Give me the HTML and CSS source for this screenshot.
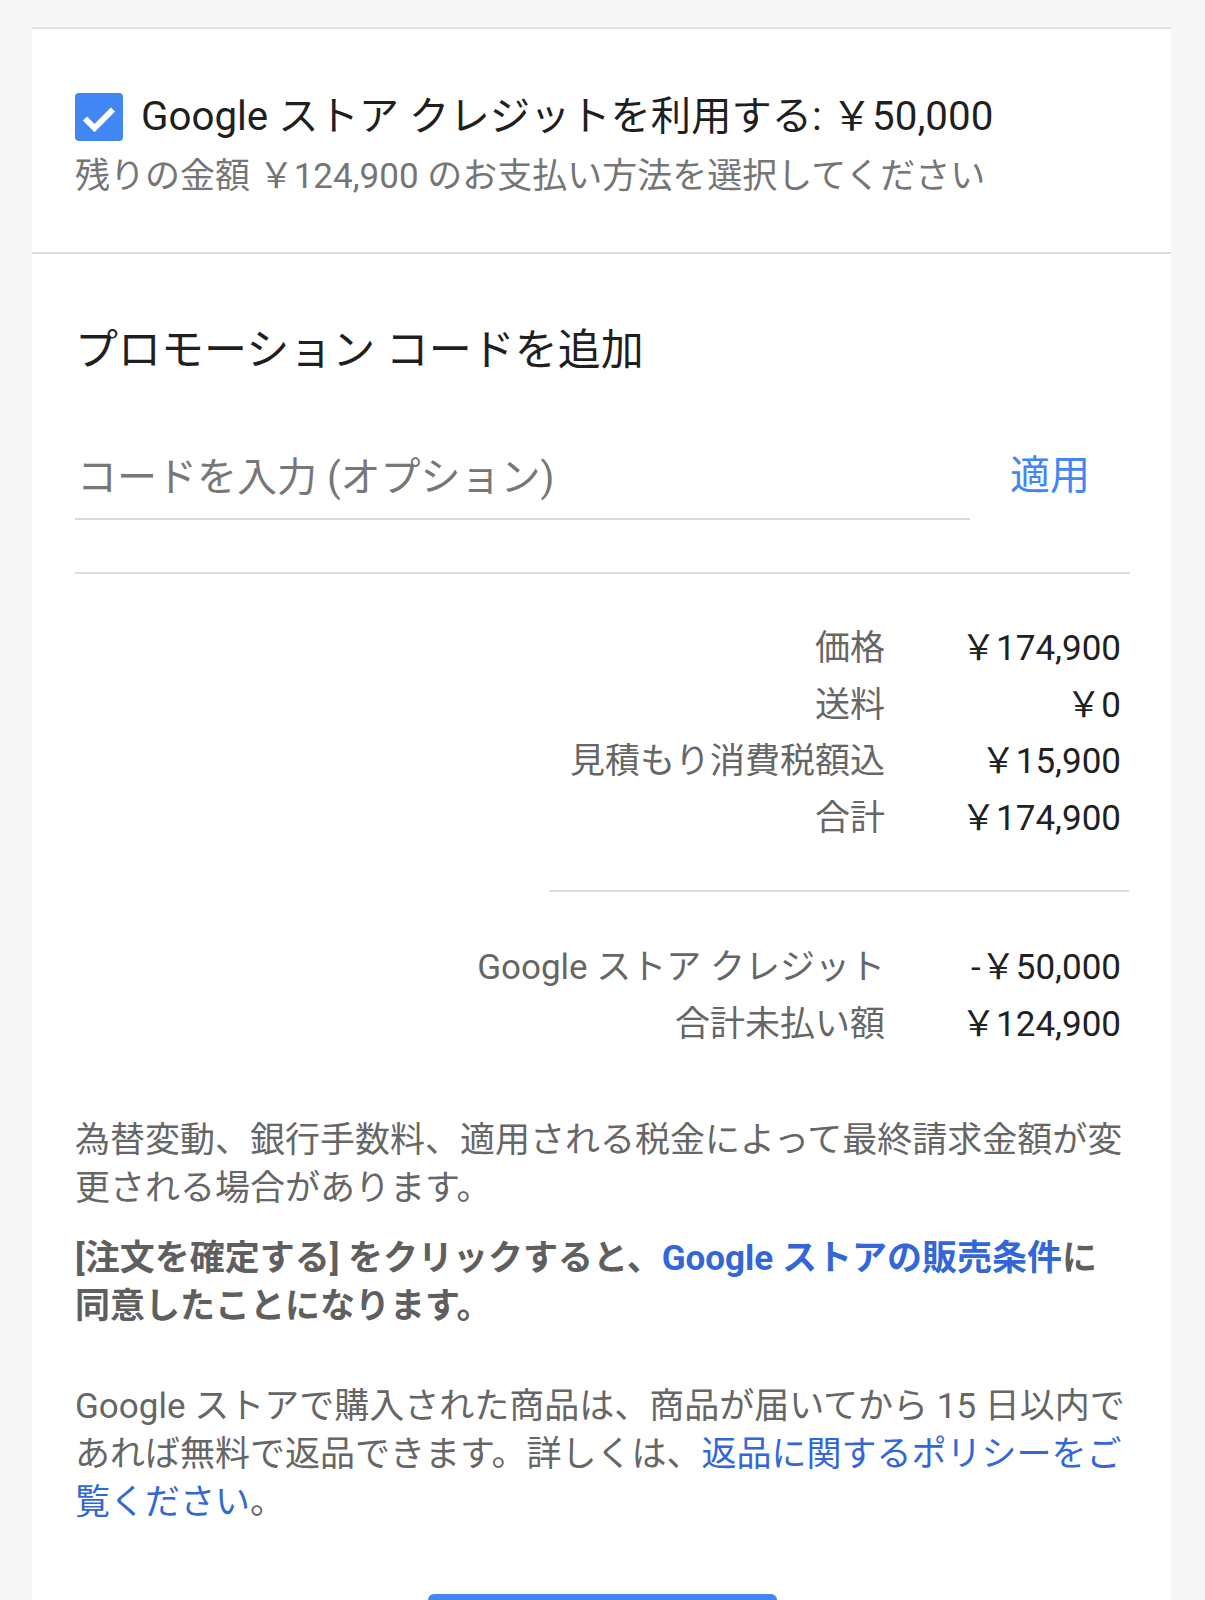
FILE: index.html
```html
<!DOCTYPE html>
<html lang="ja">
<head>
<meta charset="utf-8">
<title>Google ストア - お支払い</title>
<link rel="stylesheet" href="styles.css">
</head>
<body>
<div class="card">
  <section class="credit">
    <div class="credit-row">
      <svg class="checkbox" width="48" height="48" viewBox="0 0 48 48" aria-hidden="true">
        <rect x="0" y="0" width="48" height="48" rx="4" ry="4" fill="#4285f4"/>
        <polyline points="10,25.5 19.5,35 38,16.5" fill="none" stroke="#ffffff" stroke-width="6" stroke-linecap="butt" stroke-linejoin="miter"/>
      </svg>
      <span class="credit-title">Google ストア クレジットを利用する: ￥50,000</span>
    </div>
    <p class="credit-sub">残りの金額 ￥124,900 のお支払い方法を選択してください</p>
  </section>

  <section class="order">
    <h2 class="promo-title">プロモーション コードを追加</h2>
    <div class="promo-row">
      <input class="promo-input" type="text" placeholder="コードを入力 (オプション)">
      <button class="promo-apply" type="button">適用</button>
    </div>
    <div class="divider"></div>

    <div class="summary first">
      <div class="label">価格</div><div class="value">￥174,900</div>
      <div class="label">送料</div><div class="value">￥0</div>
      <div class="label">見積もり消費税額込</div><div class="value">￥15,900</div>
      <div class="label">合計</div><div class="value">￥174,900</div>
    </div>
    <div class="summary-sep"></div>
    <div class="summary second">
      <div class="label">Google ストア クレジット</div><div class="value">-￥50,000</div>
      <div class="label">合計未払い額</div><div class="value">￥124,900</div>
    </div>

    <p class="note first-note">為替変動、銀行手数料、適用される税金によって最終請求金額が変更される場合があります。</p>
    <p class="note terms">[注文を確定する] をクリックすると、<a class="link" href="#">Google ストアの販売条件</a>に同意したことになります。</p>
    <p class="note returns">Google ストアで購入された商品は、商品が届いてから 15 日以内であれば無料で返品できます。詳しくは、<a class="link" href="#">返品に関するポリシーをご覧ください</a>。</p>

    <div class="actions">
      <button class="confirm" type="button">注文を確定する</button>
    </div>
  </section>
</div>
</body>
</html>
```

FILE: styles.css
```css
html, body {
  margin: 0;
  padding: 0;
}

body {
  background: #f7f7f7;
  font-family: Roboto, "Noto Sans CJK JP", sans-serif;
  color: #212121;
}

.card {
  margin: 27px 34px 0 32px;
  background: #ffffff;
  border-top: 2px solid #e3e3e3;
}

/* ---------- credit section ---------- */
.credit {
  padding: 64px 0 51px 43px;
  border-bottom: 2px solid #dcdcdc;
}

.credit-row {
  display: flex;
  align-items: center;
  gap: 18px;
  height: 48px;
}

.checkbox {
  flex: none;
  display: block;
}

.credit-title {
  font-size: 40.3px;
  line-height: 48px;
  color: #1f1f1f;
  white-space: nowrap;
}

.credit-sub {
  margin: 12px 0 0;
  font-size: 35px;
  line-height: 48px;
  color: #757575;
}

/* ---------- order section ---------- */
.order {
  padding: 68px 41px 0 43px;
}

.promo-title {
  margin: 0;
  font-size: 43px;
  line-height: 56px;
  font-weight: 400;
  color: #1f1f1f;
}

.promo-row {
  display: flex;
  align-items: flex-start;
  margin-top: 71px;
}

.promo-input {
  flex: none;
  width: 893px;
  box-sizing: content-box;
  height: 56px;
  padding: 0 0 13px 2px;
  margin: 0;
  border: none;
  border-bottom: 2px solid #d9d9d9;
  outline: none;
  background: transparent;
  font-family: Roboto, "Noto Sans CJK JP", sans-serif;
  font-size: 40px;
  color: #212121;
}

.promo-input::placeholder {
  color: #777777;
  opacity: 1;
}

.promo-apply {
  flex: 1;
  height: 54px;
  padding: 0;
  margin: 0;
  border: none;
  background: none;
  font-family: Roboto, "Noto Sans CJK JP", sans-serif;
  font-size: 40px;
  line-height: 54px;
  color: #4285f4;
  text-align: center;
  cursor: pointer;
}

.divider {
  margin-top: 52px;
  height: 2px;
  background: #dcdcdc;
}

/* ---------- summary ---------- */
.summary {
  display: grid;
  grid-template-columns: 1fr 236px;
  padding-right: 9px;
  font-size: 35px;
  line-height: 56.5px;
}

.summary.first {
  margin-top: 47px;
}

.summary.second {
  margin-top: 48px;
}

.label {
  text-align: right;
  color: #666666;
  white-space: nowrap;
}

.value {
  text-align: right;
  color: #212121;
  white-space: nowrap;
}

.summary-sep {
  margin: 43px 1px 0 auto;
  width: 580px;
  height: 2px;
  background: #dcdcdc;
}

/* ---------- notes ---------- */
.note {
  margin: 0;
  font-size: 35px;
  line-height: 48px;
  color: #666666;
}

.first-note {
  margin-top: 64px;
}

.terms {
  margin-top: 22px;
  font-weight: 700;
  color: #5f5f5f;
}

.returns {
  margin-top: 52px;
}

.link {
  color: #3367d6;
  text-decoration: none;
}

.actions {
  display: flex;
  justify-content: center;
  margin-top: 67px;
}

.confirm {
  width: 349px;
  height: 96px;
  border: none;
  border-radius: 6px;
  background: #4285f4;
  color: #ffffff;
  font-family: Roboto, "Noto Sans CJK JP", sans-serif;
  font-size: 36px;
  font-weight: 500;
}
```
